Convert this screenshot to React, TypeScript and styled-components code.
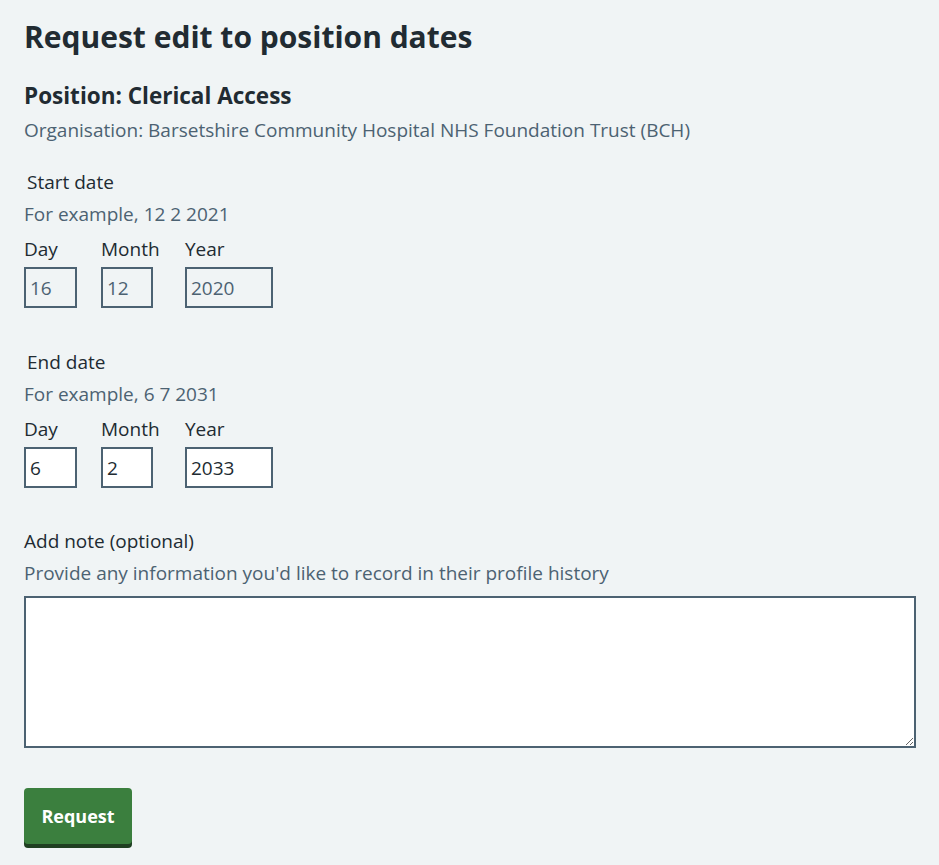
import styled, { createGlobalStyle } from "styled-components";

const GlobalStyle = createGlobalStyle`
  html, body {
    margin: 0;
    background-color: #f0f4f5;
  }
  body {
    font-family: "Open Sans", "Noto Sans", Arial, sans-serif;
    color: #212b32;
  }
`;

const Page = styled.main`
  padding: 17px 23px 20px 24px;
`;

const Title = styled.h1`
  font-size: 30px;
  line-height: 40px;
  font-weight: 700;
  margin: 0 0 23px;
`;

const Subtitle = styled.h2`
  font-size: 22.5px;
  line-height: 32px;
  font-weight: 700;
  margin: 0 0 4px;
`;

const Caption = styled.p`
  font-size: 19px;
  line-height: 28px;
  color: #4c6272;
  margin: 0;
`;

const Fieldset = styled.fieldset<{ $spaced?: boolean }>`
  border: 0;
  padding: 0;
  margin: ${(p) => (p.$spaced ? "40px" : "24px")} 0 0;
`;

const Legend = styled.legend`
  font-size: 19px;
  line-height: 28px;
  padding: 0 3px;
  margin-bottom: 4px;
`;

const Hint = styled.div`
  font-size: 19px;
  line-height: 28px;
  color: #4c6272;
  margin-bottom: 7px;
`;

const DateRow = styled.div`
  display: flex;
  gap: 24px;
  align-items: flex-start;
`;

const DateItem = styled.div<{ $min: number }>`
  display: flex;
  flex-direction: column;
  min-width: ${(p) => p.$min}px;
`;

const ItemLabel = styled.label`
  font-size: 19px;
  line-height: 28px;
  margin-bottom: 4px;
`;

const DateInput = styled.input<{ $width: number }>`
  box-sizing: border-box;
  width: ${(p) => p.$width}px;
  height: 41px;
  border: 2px solid #4c6272;
  border-radius: 0;
  padding: 0 4px;
  font-family: inherit;
  font-size: 19px;
  color: #212b32;
  background: #ffffff;
  outline: none;

  &:disabled {
    background: #f0f4f5;
    color: #4c6272;
    opacity: 1;
  }
`;

const NoteGroup = styled.div`
  margin-top: 39px;
  display: flex;
  flex-direction: column;
`;

const NoteLabel = styled.label`
  font-size: 19px;
  line-height: 28px;
  margin-bottom: 4px;
`;

const NoteArea = styled.textarea`
  box-sizing: border-box;
  width: 100%;
  height: 152px;
  margin-top: 2px;
  border: 2px solid #4c6272;
  border-radius: 0;
  padding: 4px;
  font-family: inherit;
  font-size: 19px;
  outline: none;
`;

const Button = styled.button`
  margin-top: 40px;
  width: 108px;
  height: 56px;
  border: 0;
  border-radius: 4px;
  background-color: #3b7f3e;
  box-shadow: 0 4px 0 #1f3f21;
  color: #ffffff;
  font-family: inherit;
  font-size: 18px;
  font-weight: 700;
  cursor: pointer;
`;

interface DateField {
  label: string;
  value: string;
  width: number;
  min: number;
}

const startFields: DateField[] = [
  { label: "Day", value: "16", width: 53, min: 53 },
  { label: "Month", value: "12", width: 52, min: 60 },
  { label: "Year", value: "2020", width: 88, min: 88 },
];

const endFields: DateField[] = [
  { label: "Day", value: "6", width: 53, min: 53 },
  { label: "Month", value: "2", width: 52, min: 60 },
  { label: "Year", value: "2033", width: 88, min: 88 },
];

const DateGroup = ({
  legend,
  hint,
  fields,
  disabled,
  spaced,
}: {
  legend: string;
  hint: string;
  fields: DateField[];
  disabled?: boolean;
  spaced?: boolean;
}) => (
  <Fieldset $spaced={spaced}>
    <Legend>{legend}</Legend>
    <Hint>{hint}</Hint>
    <DateRow>
      {fields.map((f) => (
        <DateItem key={f.label} $min={f.min}>
          <ItemLabel>{f.label}</ItemLabel>
          <DateInput
            $width={f.width}
            defaultValue={f.value}
            disabled={disabled}
            inputMode="numeric"
          />
        </DateItem>
      ))}
    </DateRow>
  </Fieldset>
);

export default function App() {
  return (
    <>
      <GlobalStyle />
      <Page>
        <Title>Request edit to position dates</Title>
        <Subtitle>Position: Clerical Access</Subtitle>
        <Caption>
          Organisation: Barsetshire Community Hospital NHS Foundation Trust (BCH)
        </Caption>
        <DateGroup
          legend="Start date"
          hint="For example, 12 2 2021"
          fields={startFields}
          disabled
        />
        <DateGroup
          legend="End date"
          hint="For example, 6 7 2031"
          fields={endFields}
          spaced
        />
        <NoteGroup>
          <NoteLabel>Add note (optional)</NoteLabel>
          <Hint>Provide any information you'd like to record in their profile history</Hint>
          <NoteArea />
        </NoteGroup>
        <Button>Request</Button>
      </Page>
    </>
  );
}
